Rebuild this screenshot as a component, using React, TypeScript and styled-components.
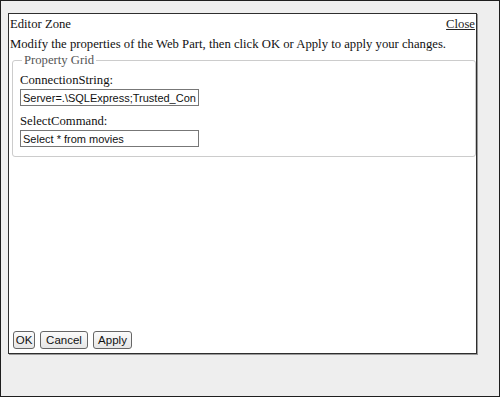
import styled, { createGlobalStyle } from "styled-components";

const GlobalStyle = createGlobalStyle`
  html, body {
    margin: 0;
    padding: 0;
    background: #ffffff;
  }
`;

const Frame = styled.div`
  box-sizing: border-box;
  width: 500px;
  height: 397px;
  border: 1px solid #1e1e1e;
  background: #eeeeee;
  padding: 12px 0 0 7px;
`;

const Panel = styled.div`
  box-sizing: border-box;
  width: 469px;
  height: 341px;
  border: 1px solid #2e2e2e;
  box-shadow: 1px 1px 0 #9a9a9a;
  background: #ffffff;
  display: flex;
  flex-direction: column;
  font-family: "Liberation Serif", "Times New Roman", serif;
  font-size: 12.7px;
  color: #111;
`;

const TitleRow = styled.div`
  display: flex;
  justify-content: space-between;
  align-items: baseline;
  padding: 1px 1px 0 1px;
  line-height: 19px;
`;

const CloseLink = styled.a`
  color: #222;
  text-decoration: underline;
  cursor: pointer;
`;

const Instructions = styled.div`
  padding: 0 0 0 1px;
  line-height: 21px;
`;

const Fieldset = styled.fieldset`
  box-sizing: border-box;
  width: 464px;
  margin: -2px 0 0 3px;
  padding: 2px 7px 9px 7px;
  border: 1px solid #cccccc;
  border-radius: 3px;
`;

const Legend = styled.legend`
  color: #555;
  padding: 0 2px;
  margin-left: 2px;
  line-height: 15px;
`;

const Field = styled.div<{ $first?: boolean }>`
  margin-top: ${(p) => (p.$first ? "1px" : "7px")};
`;

const FieldLabel = styled.div`
  line-height: 17px;
  margin-top: 2px;
`;

const TextInput = styled.input`
  box-sizing: border-box;
  display: block;
  width: 179px;
  height: 17px;
  margin: 0;
  padding: 0 2px;
  border: 1px solid #777;
  font-family: "Liberation Sans", Arial, sans-serif;
  font-size: 11px;
  color: #111;
  background: #fff;
  outline: none;
`;

const Spacer = styled.div`
  flex: 1;
`;

const ButtonRow = styled.div`
  display: flex;
  gap: 5px;
  padding: 0 0 4px 4px;
`;

const Button = styled.button<{ $w: number }>`
  box-sizing: border-box;
  width: ${(p) => p.$w}px;
  height: 18px;
  margin: 0;
  padding: 0;
  border: 1px solid #666;
  border-radius: 3px;
  background: linear-gradient(#fbfbfb, #e6e6e6);
  font-family: "Liberation Sans", Arial, sans-serif;
  font-size: 11.5px;
  color: #111;
  line-height: 16px;
`;

const fields = [
  { label: "ConnectionString:", value: "Server=.\\SQLExpress;Trusted_Connection=True;AttachDbFileName=|DataDirectory|MyDatabase.mdf;User Instance=True" },
  { label: "SelectCommand:", value: "Select * from movies" },
];

const App = () => (
  <>
    <GlobalStyle />
    <Frame>
      <Panel>
        <TitleRow>
          <span>Editor Zone</span>
          <CloseLink>Close</CloseLink>
        </TitleRow>
        <Instructions>
          Modify the properties of the Web Part, then click OK or Apply to apply your changes.
        </Instructions>
        <Fieldset>
          <Legend>Property Grid</Legend>
          {fields.map((f, i) => (
            <Field key={f.label} $first={i === 0}>
              <FieldLabel>{f.label}</FieldLabel>
              <TextInput type="text" defaultValue={f.value} readOnly />
            </Field>
          ))}
        </Fieldset>
        <Spacer />
        <ButtonRow>
          <Button $w={22}>OK</Button>
          <Button $w={48}>Cancel</Button>
          <Button $w={39}>Apply</Button>
        </ButtonRow>
      </Panel>
    </Frame>
  </>
);

export default App;
